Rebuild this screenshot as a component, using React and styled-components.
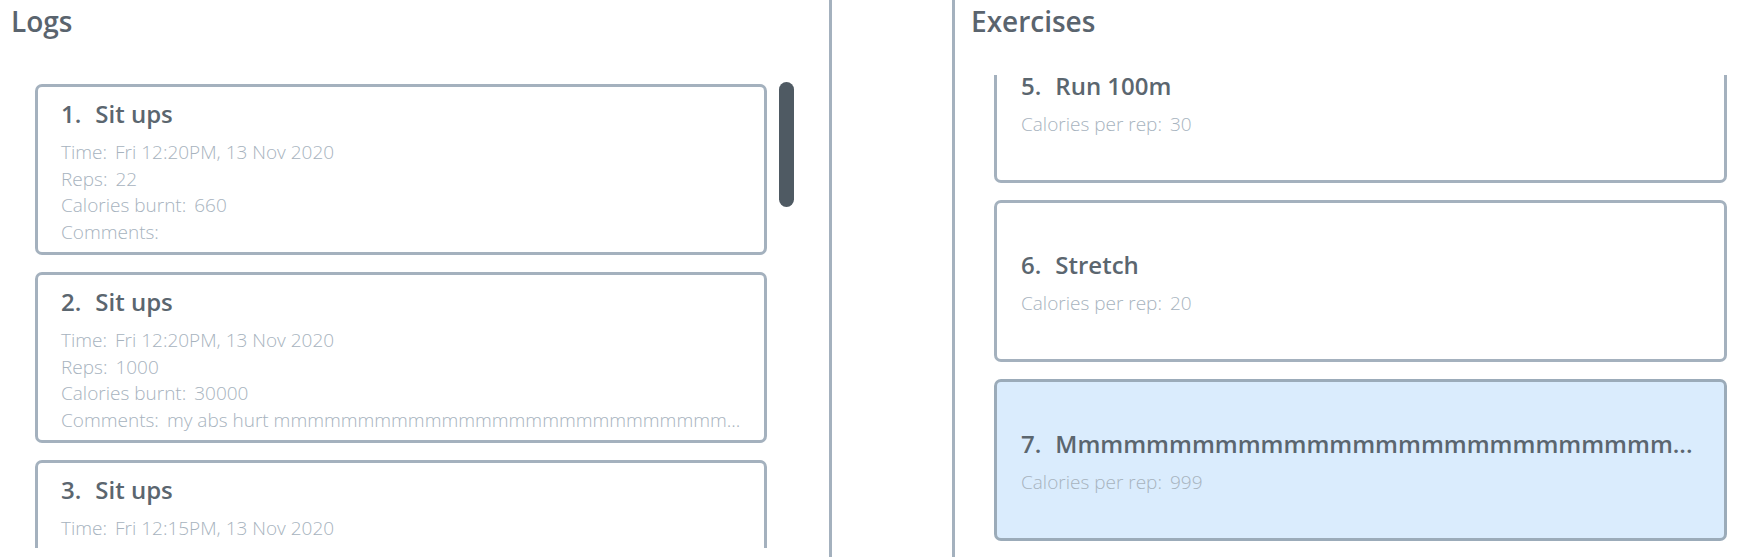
import React, { useLayoutEffect, useRef } from 'react';
import styled, { createGlobalStyle } from 'styled-components';

const logs = [
  {
    id: 1,
    name: 'Sit ups',
    time: 'Fri 12:20PM, 13 Nov 2020',
    reps: 22,
    calories: 660,
    comments: '',
  },
  {
    id: 2,
    name: 'Sit ups',
    time: 'Fri 12:20PM, 13 Nov 2020',
    reps: 1000,
    calories: 30000,
    comments: 'my abs hurt mmmmmmmmmmmmmmmmmmmmmmmmmmm...',
  },
  {
    id: 3,
    name: 'Sit ups',
    time: 'Fri 12:15PM, 13 Nov 2020',
    reps: 15,
    calories: 450,
    comments: '',
  },
];

const exercises = [
  { id: 1, name: 'Sit ups', calories: 30 },
  { id: 2, name: 'Push ups', calories: 25 },
  { id: 3, name: 'Jumping jacks', calories: 10 },
  { id: 4, name: 'Squats', calories: 15 },
  { id: 5, name: 'Run 100m', calories: 30 },
  { id: 6, name: 'Stretch', calories: 20 },
  { id: 7, name: 'Mmmmmmmmmmmmmmmmmmmmmmmmmmm...', calories: 999 },
];

const App = () => {
  const exerciseList = useRef(null);

  // the exercise list is scrolled down to the selected entry
  useLayoutEffect(() => {
    if (exerciseList.current) exerciseList.current.scrollTop = 779;
  }, []);

  return (
    <>
      <GlobalStyle />
      <Page>
        <LeftPane>
          <PaneTitle $inset="11px">Logs</PaneTitle>
          <LogArea>
            <LogColumn>
              {logs.map((log) => (
                <Card key={log.id} $height="171px">
                  <CardTitle>
                    <span>{log.id}.</span>
                    <span>{log.name}</span>
                  </CardTitle>
                  <Detail>
                    <Key>Time:</Key>
                    {log.time}
                  </Detail>
                  <Detail>
                    <Key>Reps:</Key>
                    {log.reps}
                  </Detail>
                  <Detail>
                    <Key>Calories burnt:</Key>
                    {log.calories}
                  </Detail>
                  <Detail>
                    <Key>Comments:</Key>
                    {log.comments}
                  </Detail>
                </Card>
              ))}
            </LogColumn>
            <ScrollTrack>
              <ScrollThumb />
            </ScrollTrack>
          </LogArea>
        </LeftPane>
        <MiddlePane />
        <RightPane>
          <PaneTitle $inset="16px">Exercises</PaneTitle>
          <ExerciseArea ref={exerciseList}>
            {exercises.map((ex) => (
              <Card
                key={ex.id}
                $height="162px"
                $centered
                $selected={ex.id === 7}
              >
                <CardTitle>
                  <span>{ex.id}.</span>
                  <span>{ex.name}</span>
                </CardTitle>
                <Detail>
                  <Key>Calories per rep:</Key>
                  {ex.calories}
                </Detail>
              </Card>
            ))}
          </ExerciseArea>
        </RightPane>
      </Page>
    </>
  );
};

export default App;

const GlobalStyle = createGlobalStyle`
  html, body {
    margin: 0;
    padding: 0;
    background: #ffffff;
    overflow: hidden;
  }
  body {
    font-family: "Open Sans", "Noto Sans", sans-serif;
  }
  * {
    box-sizing: border-box;
  }
`;

const Page = styled.div`
  display: flex;
  height: 100vh;
  background: #ffffff;
`;

const LeftPane = styled.div`
  width: 832px;
  display: flex;
  flex-direction: column;
  border-right: 3px solid #a4b1be;
`;

const MiddlePane = styled.div`
  width: 123px;
  border-right: 3px solid #a4b1be;
`;

const RightPane = styled.div`
  flex: 1;
  display: flex;
  flex-direction: column;
  min-width: 0;
`;

const PaneTitle = styled.h2`
  margin: 0;
  height: 75px;
  padding: 2px 0 0 ${(p) => p.$inset};
  font-size: 28px;
  line-height: 38px;
  font-weight: 600;
  color: #5a646e;
  flex-shrink: 0;
`;

const LogArea = styled.div`
  flex: 1;
  min-height: 0;
  display: flex;
  overflow: hidden;
  padding-left: 35px;
  margin-bottom: 9px;
`;

const LogColumn = styled.div`
  width: 732px;
  display: flex;
  flex-direction: column;
  gap: 17px;
  padding-top: 9px;
  flex-shrink: 0;
`;

const ScrollTrack = styled.div`
  width: 15px;
  margin-left: 12px;
  padding-top: 7px;
`;

const ScrollThumb = styled.div`
  height: 125px;
  border-radius: 8px;
  background: #4f5a63;
`;

const ExerciseArea = styled.div`
  flex: 1;
  min-height: 0;
  overflow: hidden;
  display: flex;
  flex-direction: column;
  gap: 17px;
  padding: 9px 12px 20px 39px;
  margin-bottom: 9px;
`;

const Card = styled.div`
  flex-shrink: 0;
  height: ${(p) => p.$height};
  border: 3px solid ${(p) => (p.$selected ? '#9babb9' : '#a4b1be')};
  border-radius: 7px;
  background: ${(p) => (p.$selected ? '#daecfd' : '#ffffff')};
  padding: ${(p) => (p.$centered ? '3px 26px 0 24px' : '10px 26px 6px 23px')};
  display: flex;
  flex-direction: column;
  justify-content: ${(p) => (p.$centered ? 'center' : 'flex-start')};
  overflow: hidden;
`;

const CardTitle = styled.div`
  display: flex;
  gap: 14px;
  font-size: 24px;
  line-height: 34px;
  font-weight: 600;
  color: #5b666f;
  white-space: nowrap;
  margin-bottom: 8px;
`;

const Detail = styled.div`
  font-size: 19px;
  line-height: 26.5px;
  font-weight: 300;
  color: #a7b3be;
  white-space: nowrap;
`;

const Key = styled.span`
  margin-right: 8px;
`;
